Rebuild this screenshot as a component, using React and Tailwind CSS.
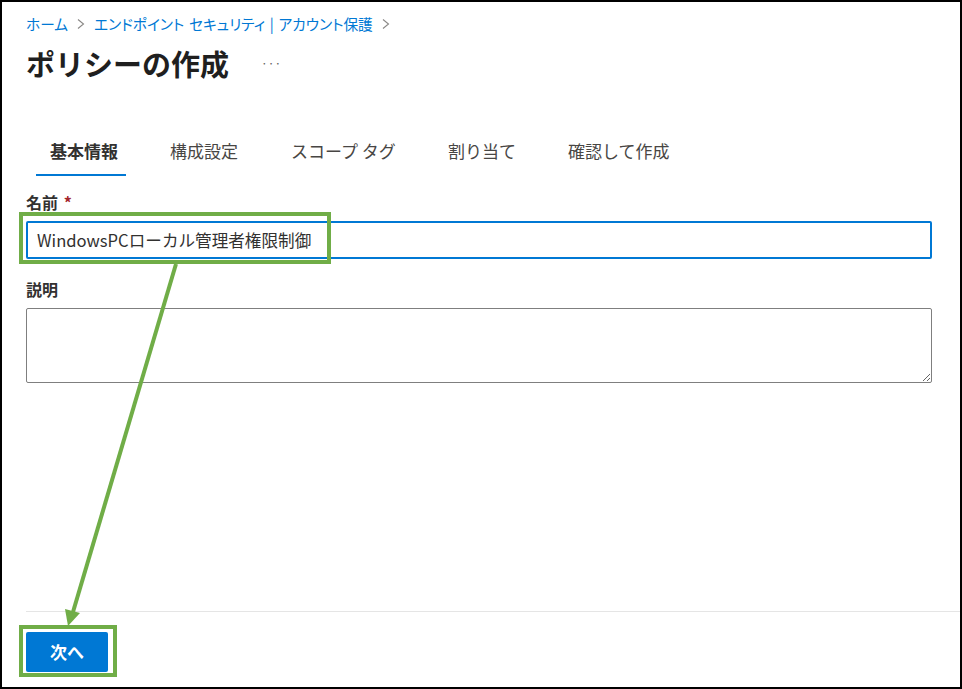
import React from "react";

const FONT = "font-['Noto_Sans_CJK_JP','Noto_Sans',sans-serif]";

function Chevron() {
  return (
    <svg width="10" height="14" viewBox="0 0 10 14" className="shrink-0">
      <path d="M2 2.5 L7.5 7 L2 11.5" fill="none" stroke="#8a8886" strokeWidth="1.1" />
    </svg>
  );
}

const tabs = [
  { label: "基本情報", cls: "w-[90px] pl-[14px] font-bold text-[#323130] border-b-[2px] border-[#0078d4]" },
  { label: "構成設定", cls: "w-[121px] pl-[44px] text-[#484644]" },
  { label: "スコープ タグ", cls: "w-[157px] pl-[44px] text-[#484644]" },
  { label: "割り当て", cls: "w-[120px] pl-[44px] text-[#484644]" },
  { label: "確認して作成", cls: "w-[160px] pl-[44px] text-[#484644]" },
];

export default function App() {
  return (
    <div className={`${FONT} relative w-[962px] h-[689px] overflow-hidden bg-white border-2 border-black flex flex-col text-[#323130]`}>
      <div className="flex items-center gap-[8px] pl-[24px] pt-[12px] h-[32px] text-[14.7px] leading-[20px] text-[#0078d4] [font-feature-settings:'palt']">
        <span>ホーム</span>
        <Chevron />
        <span className="[word-spacing:1.5px]">エンドポイント セキュリティ | アカウント保護</span>
        <Chevron />
      </div>
      <div className="flex items-center pl-[24px] mt-[9px] h-[40px]">
        <h1 className="text-[29px] leading-[40px] font-bold text-[#1f1f1f] w-[235px]">ポリシーの作成</h1>
        <span className="text-[12px] leading-[14px] text-[#605e5c]">···</span>
      </div>

      <div className="flex mt-[45px] ml-[34px] h-[48px] text-[17px] leading-[20px]">
        {tabs.map((t) => (
          <div key={t.label} className={`${t.cls} shrink-0 pt-[13px] whitespace-nowrap`}>
            {t.label}
          </div>
        ))}
      </div>

      <div className="flex flex-col px-[24px] w-[954px]">
        <label className="mt-[16px] h-[20px] text-[16px] leading-[20px] font-bold text-[#323130]">
          名前 <span className="ml-[2px] text-[#a4262c]">*</span>
        </label>
        <div className="mt-[9px] h-[38px] border-[2px] border-[#0078d4] rounded-[2px] flex items-center pl-[9px] text-[16.6px] text-[#323130]">
          WindowsPCローカル管理者権限制御
        </div>
        <label className="mt-[20px] h-[20px] text-[16px] leading-[20px] font-bold text-[#323130]">説明</label>
        <textarea className="mt-[9px] h-[75px] border border-[#7f7f7f] rounded-[2px] outline-none resize-y block" defaultValue="" />
      </div>

      <div className="flex-1" />
      <div className="ml-[24px] h-px bg-[#e5e5e5]" />
      <div className="pl-[24px] pt-[20px] pb-[15px]">
        <button className="w-[82px] h-[40px] bg-[#0078d4] rounded-[2px] text-white text-[17px] font-bold flex items-center justify-center">
          次へ
        </button>
      </div>

      <div className="absolute left-[17px] top-[210px] w-[312px] h-[52px] border-[4px] border-[#70ad47]" />
      <div className="absolute left-[17px] top-[623px] w-[98px] h-[52px] border-[4px] border-[#70ad47]" />
      <svg className="absolute left-0 top-0 pointer-events-none" width="958" height="685" viewBox="2 2 958 685">
        <line x1="176" y1="264" x2="73" y2="612" stroke="#70ad47" strokeWidth="4" />
        <polygon points="68,626 65,609 80,613" fill="#70ad47" />
      </svg>
    </div>
  );
}
